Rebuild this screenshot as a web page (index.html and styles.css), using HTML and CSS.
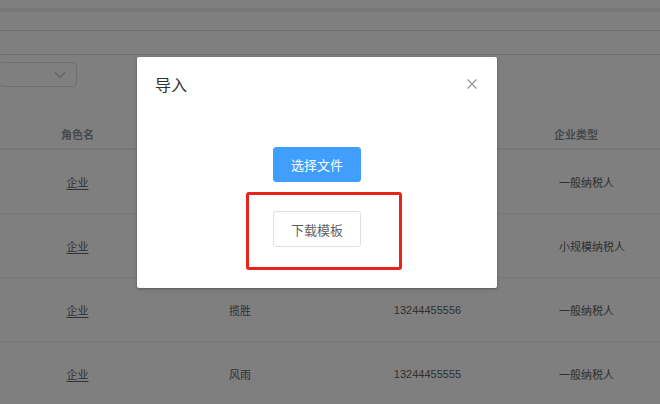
FILE: index.html
```html
<!DOCTYPE html>
<html lang="zh">
<head>
<meta charset="utf-8">
<title>导入</title>
<link rel="stylesheet" href="styles.css">
</head>
<body>
<div class="page">
  <div class="topbar"><div class="topstrip"></div></div>
  <div class="tabs"></div>
  <div class="filters">
    <div class="select">
      <svg class="chev" width="12" height="8" viewBox="0 0 12 8"><path d="M1 1.5 L6 6.5 L11 1.5" fill="none" stroke="#c0c4cc" stroke-width="1.2"/></svg>
    </div>
  </div>
  <div class="table">
    <div class="row head">
      <div class="cell c1">角色名</div>
      <div class="cell c2"></div>
      <div class="cell c3"></div>
      <div class="cell c4">企业类型</div>
    </div>
    <div class="row">
      <div class="cell c1"><span class="link">企业</span></div>
      <div class="cell c2">路虎</div>
      <div class="cell c3">13244455557</div>
      <div class="cell c4">一般纳税人</div>
    </div>
    <div class="row">
      <div class="cell c1"><span class="link">企业</span></div>
      <div class="cell c2">奔驰</div>
      <div class="cell c3">13244455558</div>
      <div class="cell c4">小规模纳税人</div>
    </div>
    <div class="row">
      <div class="cell c1"><span class="link">企业</span></div>
      <div class="cell c2">揽胜</div>
      <div class="cell c3">13244455556</div>
      <div class="cell c4">一般纳税人</div>
    </div>
    <div class="row">
      <div class="cell c1"><span class="link">企业</span></div>
      <div class="cell c2">风雨</div>
      <div class="cell c3">13244455555</div>
      <div class="cell c4">一般纳税人</div>
    </div>
  </div>
</div>
<div class="overlay"></div>
<div class="dialog">
  <div class="dialog-header">
    <span class="dialog-title">导入</span>
    <svg class="close" width="10" height="10" viewBox="0 0 10 10"><path d="M0.5 0.5 L9.5 9.5 M9.5 0.5 L0.5 9.5" stroke="#909399" stroke-width="1.1" fill="none"/></svg>
  </div>
  <div class="dialog-body">
    <button class="btn btn-primary">选择文件</button>
    <button class="btn btn-default">下载模板</button>
  </div>
  <div class="mark"></div>
</div>
</body>
</html>
```

FILE: styles.css
```css
* { box-sizing: border-box; }
html, body { margin: 0; padding: 0; }
body {
  width: 660px;
  height: 404px;
  overflow: hidden;
  background: #ffffff;
  font-family: "Liberation Sans", "Noto Sans CJK SC", sans-serif;
  position: relative;
}
.page { width: 660px; }
.topbar {
  height: 31px;
  padding-top: 8px;
  border-bottom: 1px solid #dcdfe6;
}
.topstrip { height: 4px; background: #efefef; }
.tabs {
  height: 24px;
  border-bottom: 1px solid #dcdfe6;
}
.filters {
  height: 63px;
  padding-top: 7px;
}
.select {
  width: 78px;
  height: 25px;
  margin-left: -1px;
  border: 1px solid #dcdfe6;
  border-radius: 4px;
  display: flex;
  align-items: center;
  justify-content: flex-end;
  padding-right: 10px;
}
.table { font-size: 11px; color: #606266; }
.row {
  display: grid;
  grid-template-columns: 155px 170px 205px 130px;
  height: 64px;
  align-items: center;
  border-bottom: 1px solid #ebeef5;
}
.row.head {
  height: 32px;
  align-items: start;
  padding-top: 8px;
  font-weight: bold;
  color: #909399;
  border-bottom: 2px solid #ebeef5;
}
.cell { text-align: center; }
.cell.c4 { text-align: left; padding-left: 29px; }
.head .cell.c4 { padding-left: 24px; }
.link { text-decoration: underline; text-underline-offset: 2px; }

.overlay {
  position: absolute;
  inset: 0;
  background: rgba(0, 0, 0, 0.5);
}
.dialog {
  position: absolute;
  left: 137px;
  top: 57px;
  width: 360px;
  height: 231px;
  background: #ffffff;
  box-shadow: 0 1px 3px rgba(0, 0, 0, 0.3);
  border-radius: 2px;
}
.dialog-header {
  display: flex;
  justify-content: space-between;
  align-items: flex-start;
  padding: 19px 20px 0 18px;
  height: 50px;
}
.dialog-title {
  font-size: 16px;
  line-height: 20px;
  color: #303133;
}
.close { margin-top: 3px; }
.dialog-body {
  display: flex;
  flex-direction: column;
  align-items: center;
  gap: 29px;
  padding-top: 40px;
}
.btn {
  width: 88px;
  height: 35px;
  border-radius: 3px;
  font-size: 13px;
  font-family: "Liberation Sans", "Noto Sans CJK SC", sans-serif;
  padding: 0;
  cursor: pointer;
}
.btn-primary {
  background: #409eff;
  border: 1px solid #409eff;
  color: #ffffff;
}
.btn-default {
  background: #ffffff;
  border: 1px solid #dcdfe6;
  color: #606266;
  height: 36px;
}
.mark {
  position: absolute;
  left: 109px;
  top: 135px;
  width: 156px;
  height: 78px;
  border: 3px solid #e8231c;
  border-radius: 3px;
}
```
